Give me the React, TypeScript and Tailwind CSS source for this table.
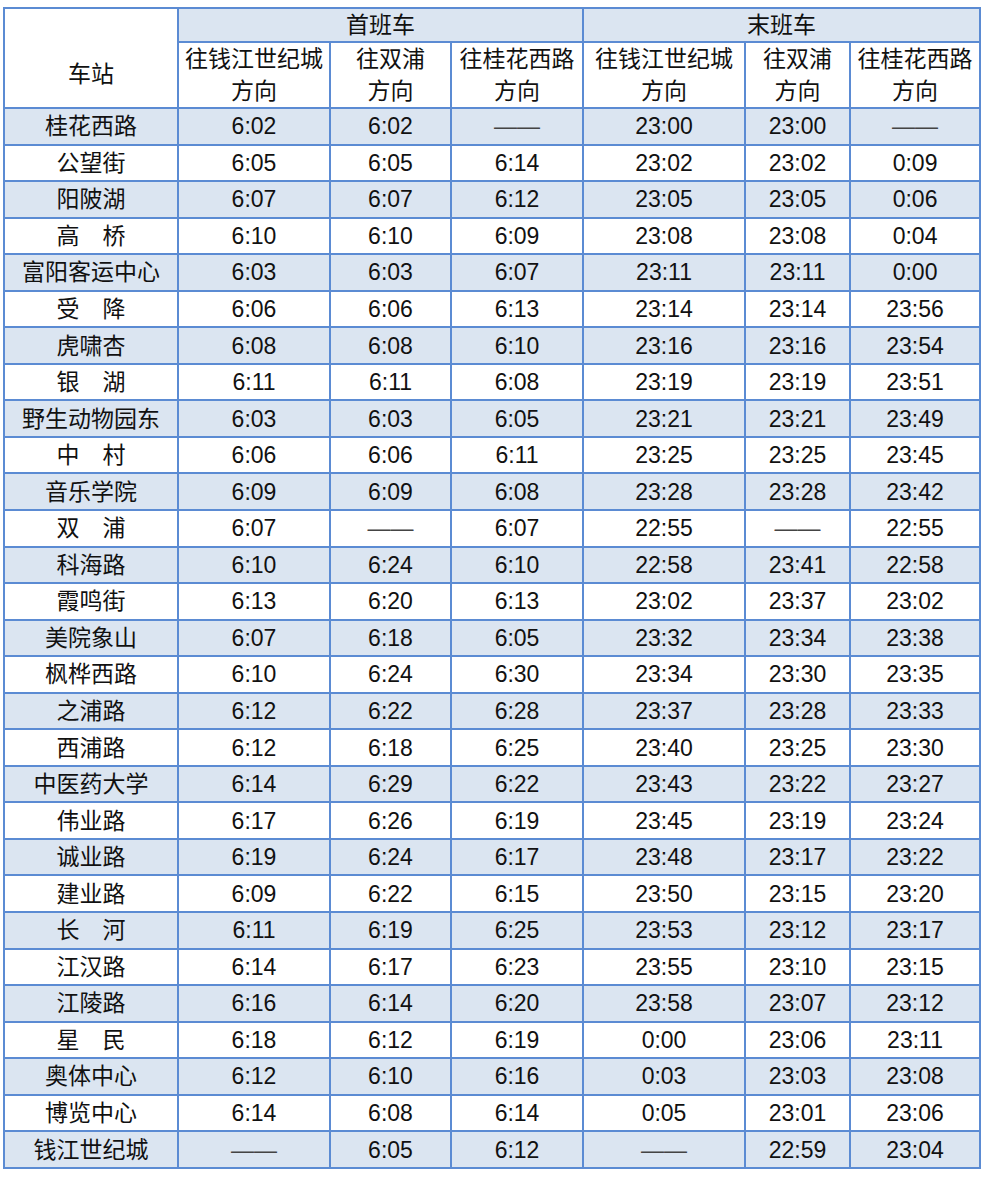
const rows: string[][] = [
	["桂花西路", "6:02", "6:02", "——", "23:00", "23:00", "——"],
	["公望街", "6:05", "6:05", "6:14", "23:02", "23:02", "0:09"],
	["阳陂湖", "6:07", "6:07", "6:12", "23:05", "23:05", "0:06"],
	["高　桥", "6:10", "6:10", "6:09", "23:08", "23:08", "0:04"],
	["富阳客运中心", "6:03", "6:03", "6:07", "23:11", "23:11", "0:00"],
	["受　降", "6:06", "6:06", "6:13", "23:14", "23:14", "23:56"],
	["虎啸杏", "6:08", "6:08", "6:10", "23:16", "23:16", "23:54"],
	["银　湖", "6:11", "6:11", "6:08", "23:19", "23:19", "23:51"],
	["野生动物园东", "6:03", "6:03", "6:05", "23:21", "23:21", "23:49"],
	["中　村", "6:06", "6:06", "6:11", "23:25", "23:25", "23:45"],
	["音乐学院", "6:09", "6:09", "6:08", "23:28", "23:28", "23:42"],
	["双　浦", "6:07", "——", "6:07", "22:55", "——", "22:55"],
	["科海路", "6:10", "6:24", "6:10", "22:58", "23:41", "22:58"],
	["霞鸣街", "6:13", "6:20", "6:13", "23:02", "23:37", "23:02"],
	["美院象山", "6:07", "6:18", "6:05", "23:32", "23:34", "23:38"],
	["枫桦西路", "6:10", "6:24", "6:30", "23:34", "23:30", "23:35"],
	["之浦路", "6:12", "6:22", "6:28", "23:37", "23:28", "23:33"],
	["西浦路", "6:12", "6:18", "6:25", "23:40", "23:25", "23:30"],
	["中医药大学", "6:14", "6:29", "6:22", "23:43", "23:22", "23:27"],
	["伟业路", "6:17", "6:26", "6:19", "23:45", "23:19", "23:24"],
	["诚业路", "6:19", "6:24", "6:17", "23:48", "23:17", "23:22"],
	["建业路", "6:09", "6:22", "6:15", "23:50", "23:15", "23:20"],
	["长　河", "6:11", "6:19", "6:25", "23:53", "23:12", "23:17"],
	["江汉路", "6:14", "6:17", "6:23", "23:55", "23:10", "23:15"],
	["江陵路", "6:16", "6:14", "6:20", "23:58", "23:07", "23:12"],
	["星　民", "6:18", "6:12", "6:19", "0:00", "23:06", "23:11"],
	["奥体中心", "6:12", "6:10", "6:16", "0:03", "23:03", "23:08"],
	["博览中心", "6:14", "6:08", "6:14", "0:05", "23:01", "23:06"],
	["钱江世纪城", "——", "6:05", "6:12", "——", "22:59", "23:04"],
];

const cell = "border-2 border-[#5b8bd3] p-0 text-center align-middle font-normal";

function Dir(props: { to: string }) {
	return (
		<th className={cell}>
			{props.to}
			<br />
			方向
		</th>
	);
}

export default function App() {
	return (
		<div className="bg-white w-[988px] h-[1178px] pt-[7px] pl-[3px] text-[#111] text-[23px] leading-[32px] [font-family:'Liberation_Sans','Noto_Sans_CJK_SC',sans-serif]">
			<table className="table-fixed border-collapse w-[978px]">
				<colgroup>
					<col className="w-[174px]" />
					<col className="w-[152px]" />
					<col className="w-[121px]" />
					<col className="w-[132px]" />
					<col className="w-[162px]" />
					<col className="w-[105px]" />
					<col className="w-[130px]" />
				</colgroup>
				<thead>
					<tr className="h-[33px]">
						<th rowSpan={2} className={cell + " bg-white pt-[32px]"}>
							车站
						</th>
						<th colSpan={3} className={cell + " bg-[#dbe5f1]"}>
							首班车
						</th>
						<th colSpan={3} className={cell + " bg-[#dbe5f1]"}>
							末班车
						</th>
					</tr>
					<tr className="h-[65px]">
						<Dir to="往钱江世纪城" />
						<Dir to="往双浦" />
						<Dir to="往桂花西路" />
						<Dir to="往钱江世纪城" />
						<Dir to="往双浦" />
						<Dir to="往桂花西路" />
					</tr>
				</thead>
				<tbody>
					{rows.map((r, i) => (
						<tr
							key={r[0]}
							className={"h-[36.55px] " + (i % 2 === 0 ? "bg-[#dbe5f1]" : "bg-white")}
						>
							{r.map((v, j) =>
								v === "——" ? (
									<td key={j} className={cell + " text-[#444]"}>
										——
									</td>
								) : (
									<td key={j} className={cell}>
										{v}
									</td>
								),
							)}
						</tr>
					))}
				</tbody>
			</table>
		</div>
	);
}
